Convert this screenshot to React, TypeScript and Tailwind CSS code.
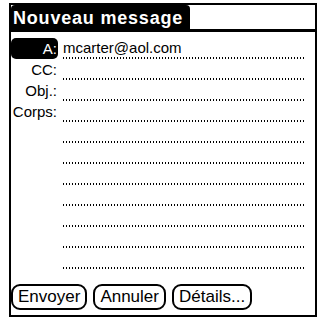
import React from 'react';

// Palm OS style "new message" form
const dots =
  'h-[2px] w-full bg-[repeating-linear-gradient(to_right,#000_0_1px,transparent_1px_3px)]';

const FieldRow: React.FC<{ label?: string; value?: string; active?: boolean }> = ({
  label,
  value,
  active,
}) => (
  <div className="flex h-[21px]">
    <div className="w-[47px] shrink-0 flex justify-end">
      {label && (
        <span
          className={
            active
              ? 'h-[21px] w-full bg-black text-white rounded-[5px] text-right pr-[1px] leading-[21px]'
              : 'leading-[21px] pr-[1px]'
          }
        >
          {label}
        </span>
      )}
    </div>
    <div className="ml-[5px] w-[242px] flex flex-col justify-end">
      {value && <span className="leading-[18px]">{value}</span>}
      <div className={dots} />
    </div>
  </div>
);

const PalmButton: React.FC<{ children: React.ReactNode }> = ({ children }) => (
  <button className="h-[26px] px-[5px] border-2 border-black rounded-[9px] leading-[20px] text-[17px] text-black bg-white">
    {children}
  </button>
);

export default function App() {
  const bodyLines = Array.from({ length: 7 });
  return (
    <div
      className="w-[323px] h-[320px] bg-white pt-[3px] pl-[9px] text-[15px] text-black"
      style={{ fontFamily: '"Liberation Sans", Arial, sans-serif' }}
    >
      <div className="w-[308px] h-[314px] border-2 border-black flex flex-col">
        {/* Title bar */}
        <div className="flex h-[27px] shrink-0">
          <div className="w-[179px] bg-black text-white font-bold text-[18px] tracking-[0.8px] leading-[26px] pl-[2px] rounded-t-[4px]">
            Nouveau message
          </div>
          <div className="flex-1 border-b-[3px] border-black" />
        </div>

        {/* Fields */}
        <div className="mt-[6px] flex flex-col">
          <FieldRow label="A:" value="mcarter@aol.com" active />
          <FieldRow label="CC:" />
          <FieldRow label="Obj.:" />
          <FieldRow label="Corps:" />
          {bodyLines.map((_, i) => (
            <FieldRow key={i} />
          ))}
        </div>

        {/* Buttons */}
        <div className="mt-auto mb-[5px] flex gap-[6px]">
          <PalmButton>Envoyer</PalmButton>
          <PalmButton>Annuler</PalmButton>
          <PalmButton>Détails...</PalmButton>
        </div>
      </div>
    </div>
  );
}
